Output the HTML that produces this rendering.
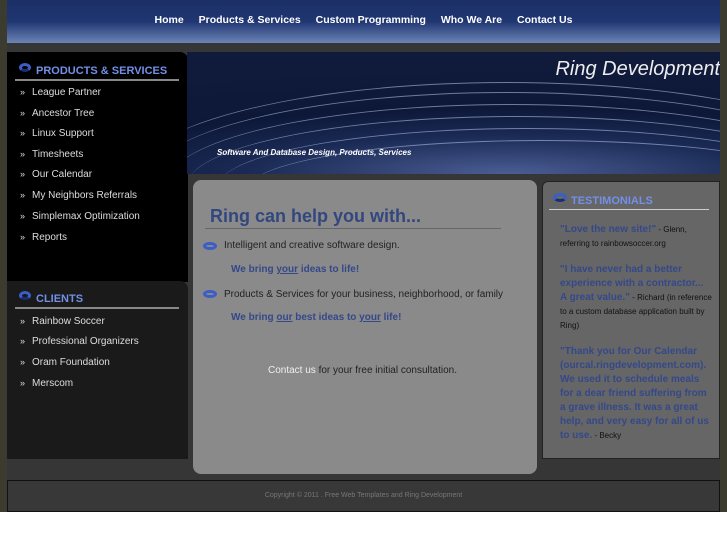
<!DOCTYPE html>
<html><head><style>
*{margin:0;padding:0;box-sizing:border-box}
body{width:727px;height:545px;background:#fff;font-family:"Liberation Sans",sans-serif;position:relative;overflow:hidden}
#bg{position:absolute;left:0;top:0;width:727px;height:512px;background:#3b3b30}
.a{position:absolute}
#hdr{left:7px;top:0;width:713px;height:43px;background:linear-gradient(#1c2f66 0%,#1f3672 50%,#6d84b6 100%)}
#nav{left:7px;top:14px;width:713px;text-align:center;font-size:10.5px;font-weight:bold;color:#fff}
#nav span{margin:0 6px}
#strip{left:7px;top:43px;width:713px;height:437px;background:#363636}
#side1{left:7px;top:52px;width:181px;height:230px;background:#000;border-radius:0 8px 0 0}
#side2{left:7px;top:281px;width:181px;height:178px;background:#1a1a1a;border-radius:0 8px 0 0}
.hd{color:#7390e8;font-weight:bold;font-size:11px;position:absolute;left:8px;width:164px;border-bottom:2px solid #888;padding:0 0 2px 21px}
.hd i{position:absolute;left:4px;top:-2px;width:12px;height:9px;border-radius:50%;border:3px solid #3a5ec8;border-bottom-color:#1a2f70}
.li{position:absolute;left:13px;color:#ddd;font-size:10px}
.li b{font-weight:normal;font-size:9px;margin-right:7px}
#ban{left:187px;top:52px;width:533px;height:122px;overflow:hidden;background:radial-gradient(ellipse 140% 90% at 60% 100%,#4b5e94 0%,#1a2a55 35%,#0d1838 60%,#101a3a 100%)}
.ln{position:absolute;border-top:1.5px solid rgba(190,205,240,.55);border-radius:50%}
#box{left:193px;top:180px;width:344px;height:294px;background:#8a8a8a;border-radius:8px}
#tes{left:542px;top:181px;width:178px;height:278px;background:#666;border:1px solid #222;border-radius:6px 0 0 0}
.bl{color:#34488a;font-weight:bold}
#ft{left:7px;top:480px;width:713px;height:32px;background:#383838;border:1px solid #111;text-align:center;font-size:7px;color:#777;padding-top:11px}
</style></head><body>
<div id="bg"></div>
<div class="a" id="hdr"></div>
<div class="a" id="nav"><span>Home</span> <span>Products &amp; Services</span> <span>Custom Programming</span> <span>Who We Are</span> <span>Contact Us</span></div>
<div class="a" id="strip"></div>
<div class="a" id="side1">
<div class="hd" style="top:13px"><i></i>PRODUCTS &amp; SERVICES</div>
<div class="li" style="top:35px"><b>»</b>League Partner</div>
<div class="li" style="top:56px"><b>»</b>Ancestor Tree</div>
<div class="li" style="top:76px"><b>»</b>Linux Support</div>
<div class="li" style="top:97px"><b>»</b>Timesheets</div>
<div class="li" style="top:117px"><b>»</b>Our Calendar</div>
<div class="li" style="top:138px"><b>»</b>My Neighbors Referrals</div>
<div class="li" style="top:159px"><b>»</b>Simplemax Optimization</div>
<div class="li" style="top:180px"><b>»</b>Reports</div>
</div>
<div class="a" id="side2">
<div class="hd" style="top:12px"><i></i>CLIENTS</div>
<div class="li" style="top:35px"><b>»</b>Rainbow Soccer</div>
<div class="li" style="top:55px"><b>»</b>Professional Organizers</div>
<div class="li" style="top:76px"><b>»</b>Oram Foundation</div>
<div class="li" style="top:97px"><b>»</b>Merscom</div>
</div>
<div class="a" id="ban">
<div class="ln" style="left:-60px;top:30px;width:760px;height:200px"></div>
<div class="ln" style="left:-40px;top:40px;width:720px;height:180px"></div>
<div class="ln" style="left:-20px;top:52px;width:690px;height:160px"></div>
<div class="ln" style="left:0px;top:64px;width:660px;height:140px"></div>
<div class="ln" style="left:30px;top:76px;width:620px;height:120px"></div>
<div class="ln" style="left:60px;top:88px;width:590px;height:100px"></div>
<div class="a" style="right:0;top:6px;color:#eee;font-size:20px;font-style:italic">Ring Development</div>
<div class="a" style="left:30px;top:96px;color:#fff;font-size:8px;font-style:italic;font-weight:bold">Software And Database Design, Products, Services</div>
</div>
<div class="a" id="box">
<div class="a" style="left:12px;top:26px;width:296px;border-bottom:1px solid #666;color:#33477f;font-size:18px;font-weight:bold;padding:0 0 1px 5px">Ring can help you with...</div>
<div class="a" style="left:10px;top:62px;width:14px;height:8px;border-radius:50%;border:3px solid #3a5ec8"></div>
<div class="a" style="left:31px;top:60px;font-size:10px;color:#222">Intelligent and creative software design.</div>
<div class="a bl" style="left:38px;top:84px;font-size:10px">We bring <u>your</u> ideas to life!</div>
<div class="a" style="left:10px;top:110px;width:14px;height:8px;border-radius:50%;border:3px solid #3a5ec8"></div>
<div class="a" style="left:31px;top:109px;font-size:10px;color:#222">Products &amp; Services for your business, neighborhood, or family</div>
<div class="a bl" style="left:38px;top:132px;font-size:10px">We bring <u>our</u> best ideas to <u>your</u> life!</div>
<div class="a" style="left:75px;top:185px;font-size:10px;color:#222"><span style="color:#eee">Contact us</span> for your free initial consultation.</div>
</div>
<div class="a" id="tes">
<div class="hd" style="top:13px;left:6px;width:160px;border-bottom:1px solid #ccc;padding-left:22px">TESTIMONIALS<i style="width:14px"></i></div>
<div class="a" style="left:17px;top:41px;width:152px;font-size:8px;line-height:14px;color:#111">
<div><span class="bl" style="font-size:10px">"Love the new site!"</span> - Glenn, referring to rainbowsoccer.org</div>
<div style="margin-top:12px"><span class="bl" style="font-size:10px">"I have never had a better experience with a contractor... A great value."</span> - Richard (in reference to a custom database application built by Ring)</div>
<div style="margin-top:12px"><span class="bl" style="font-size:10px">"Thank you for Our Calendar (ourcal.ringdevelopment.com). We used it to schedule meals for a dear friend suffering from a grave illness. It was a great help, and very easy for all of us to use.</span> - Becky</div>
</div>
</div>
<div class="a" id="ft">Copyright © 2011 . Free Web Templates and Ring Development</div>
</body></html>
